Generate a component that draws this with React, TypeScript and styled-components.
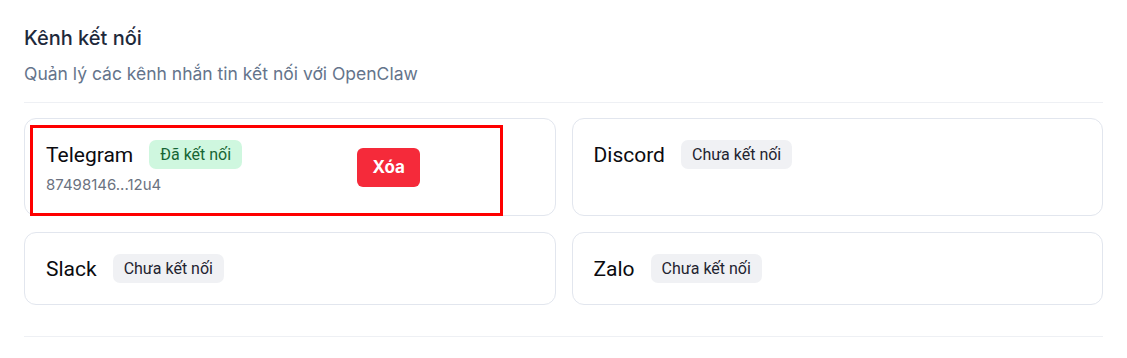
import React from 'react';
import styled, { createGlobalStyle } from 'styled-components';

const GlobalStyle = createGlobalStyle`
  body {
    margin: 0;
    background: #ffffff;
    font-family: Inter, "Noto Sans", sans-serif;
  }
`;

const Section = styled.section`
  padding: 24px 24px 0 24px;
`;

const Title = styled.h2`
  margin: 0;
  font-size: 20px;
  line-height: 28px;
  font-weight: 500;
  color: #1e293b;
`;

const Subtitle = styled.p`
  margin: 11px 0 0 0;
  font-size: 17.5px;
  line-height: 22px;
  color: #64748b;
`;

const Divider = styled.div<{ gap: number }>`
  height: 1px;
  background: #eef0f4;
  margin-top: ${props => props.gap}px;
`;

const Grid = styled.div`
  display: grid;
  grid-template-columns: 1fr 1fr;
  gap: 16px;
  margin-top: 15px;
`;

const Card = styled.div`
  position: relative;
  display: flex;
  align-items: flex-start;
  border: 1px solid #e2e6ee;
  border-radius: 12px;
  padding: 21px 20px;
`;

const CardBody = styled.div`
  display: flex;
  align-items: center;
`;

const Info = styled.div`
  display: flex;
  flex-direction: column;
  gap: 6px;
`;

const Header = styled.div`
  display: flex;
  align-items: center;
  gap: 16px;
`;

const Name = styled.span`
  font-family: Roboto, "Liberation Sans", sans-serif;
  font-size: 21px;
  font-weight: 400;
  color: #0b0b0f;
  padding-left: 1px;
`;

const Badge = styled.span<{ connected?: boolean }>`
  font-family: Roboto, "Liberation Sans", sans-serif;
  font-size: 16px;
  line-height: 19px;
  padding: 5px 11px;
  border-radius: 7px;
  background: ${props => (props.connected ? '#cff7df' : '#f0f1f4')};
  color: ${props => (props.connected ? '#166534' : '#1f2430')};
`;

const Token = styled.span`
  font-size: 15px;
  line-height: 19px;
  color: #6b7280;
  padding-left: 1px;
`;

const DeleteButton = styled.button`
  margin-left: 115px;
  width: 63px;
  height: 39px;
  border: none;
  border-radius: 6px;
  background: #f52a3a;
  color: #ffffff;
  font-family: Inter, "Noto Sans", sans-serif;
  font-size: 17px;
  font-weight: 700;
  cursor: pointer;
`;

const Highlight = styled.div`
  position: absolute;
  left: 5px;
  top: 6px;
  width: 473px;
  height: 91px;
  box-sizing: border-box;
  border: 3px solid #fe0000;
  pointer-events: none;
`;

interface Channel {
  name: string;
  connected: boolean;
  token?: string;
}

const channels: Channel[] = [
  { name: 'Telegram', connected: true, token: '87498146...12u4' },
  { name: 'Discord', connected: false },
  { name: 'Slack', connected: false },
  { name: 'Zalo', connected: false },
];

const App: React.FC = () => {
  return (
    <>
      <GlobalStyle />
      <Section>
        <Title>Kênh kết nối</Title>
        <Subtitle>Quản lý các kênh nhắn tin kết nối với OpenClaw</Subtitle>
        <Divider gap={17} />
        <Grid>
          {channels.map(ch => (
            <Card key={ch.name}>
              <CardBody>
                <Info>
                  <Header>
                    <Name>{ch.name}</Name>
                    <Badge connected={ch.connected}>
                      {ch.connected ? 'Đã kết nối' : 'Chưa kết nối'}
                    </Badge>
                  </Header>
                  {ch.token && <Token>{ch.token}</Token>}
                </Info>
                {ch.connected && <DeleteButton>Xóa</DeleteButton>}
              </CardBody>
              {ch.connected && <Highlight />}
            </Card>
          ))}
        </Grid>
        <Divider gap={31} />
      </Section>
    </>
  );
};

export default App;
